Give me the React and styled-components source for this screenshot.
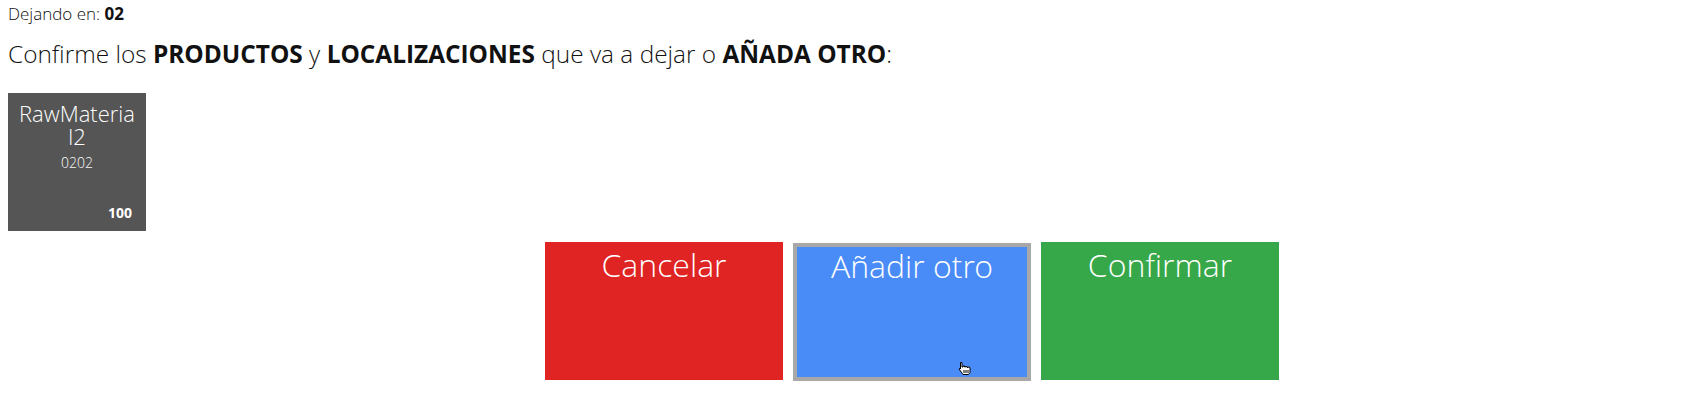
import React from 'react';
import styled, { createGlobalStyle } from 'styled-components';

const GlobalStyle = createGlobalStyle`
  html, body {
    margin: 0;
    padding: 0;
    background: #fff;
  }
  body {
    font-family: "Open Sans Light", "Open Sans", "Liberation Sans", sans-serif;
    font-weight: 300;
    color: #111;
  }
`;

const Page = styled.div`
  padding: 2px 8px 0;
`;

const Info = styled.div`
  font-size: 17px;
  b {
    font-family: "Open Sans", "Liberation Sans", sans-serif;
    font-weight: 700;
  }
`;

const Prompt = styled.h2`
  margin: 12px 0 0;
  font-size: 24.4px;
  font-weight: 300;
  b {
    font-family: "Open Sans", "Liberation Sans", sans-serif;
    font-weight: 700;
  }
`;

const Tiles = styled.div`
  display: flex;
  gap: 10px;
  margin-top: 23px;
`;

const Tile = styled.div`
  width: 138px;
  height: 138px;
  box-sizing: border-box;
  background: #555555;
  color: #fff;
  display: flex;
  flex-direction: column;
  align-items: center;
  padding: 9px 10px 9px;
  text-align: center;
`;

const TileName = styled.div`
  font-size: 22px;
  line-height: 23px;
  word-break: break-all;
  width: 100%;
`;

const TileCode = styled.div`
  font-size: 14px;
  margin-top: 5px;
  color: #f4f4f4;
`;

const TileQty = styled.div`
  margin-top: auto;
  align-self: flex-end;
  margin-right: 4px;
  font-family: "Open Sans", "Liberation Sans", sans-serif;
  font-size: 14px;
  font-weight: 700;
`;

const Actions = styled.div`
  display: flex;
  align-items: flex-start;
  gap: 10px;
  margin-top: 11px;
  padding-left: 537px;
`;

const colors = {
  red: '#e02323',
  blue: '#4a8cf7',
  green: '#37a849',
};

const ActionButton = styled.button`
  position: relative;
  width: 238px;
  height: 138px;
  box-sizing: border-box;
  display: flex;
  justify-content: center;
  align-items: flex-start;
  padding: 1px 0 0;
  margin: ${(p) => (p.$active ? '1px 0 0' : '0')};
  border: none;
  box-shadow: ${(p) => (p.$active ? 'inset 0 0 0 4px #a8a8a8' : 'none')};
  background: ${(p) => colors[p.$color]};
  color: #fff;
  font-family: "Open Sans Light", "Open Sans", "Liberation Sans", sans-serif;
  font-weight: 300;
  font-size: 32px;
  line-height: 1.362;
  cursor: pointer;
`;

const Cursor = styled.svg`
  position: absolute;
  left: 165px;
  top: 118px;
  width: 15px;
  height: 15px;
`;

const HandCursor = () => (
  <Cursor viewBox="0 0 15 15">
    <path
      d="M2.5 1.5 L4 1.5 L4 6 L5 6 L5 5 L6.5 5 L6.5 6 L7.5 6 L7.5 5.5 L9 5.5 L9 6.5 L10 6.5 L10 6 L11.5 6 L12 7 L12 11.5 L10.5 13.5 L5 13.5 L2.5 10 L1 8 L2 7.5 L2.5 8 L2.5 1.5 Z"
      fill="#fff"
      stroke="#000"
      strokeWidth="1"
      strokeLinejoin="round"
    />
    <path d="M6 9 L6 12 M8 9 L8 12 M10 9 L10 12" stroke="#000" strokeWidth="1" />
  </Cursor>
);

export default function App() {
  return (
    <>
      <GlobalStyle />
      <Page>
        <Info>
          Dejando en: <b>02</b>
        </Info>
        <Prompt>
          Confirme los <b>PRODUCTOS</b> y <b>LOCALIZACIONES</b> que va a dejar o{' '}
          <b>AÑADA OTRO</b>:
        </Prompt>
        <Tiles>
          <Tile>
            <TileName>RawMaterial2</TileName>
            <TileCode>0202</TileCode>
            <TileQty>100</TileQty>
          </Tile>
        </Tiles>
        <Actions>
          <ActionButton $color="red">Cancelar</ActionButton>
          <ActionButton $color="blue" $active>
            Añadir otro
            <HandCursor />
          </ActionButton>
          <ActionButton $color="green">Confirmar</ActionButton>
        </Actions>
      </Page>
    </>
  );
}
